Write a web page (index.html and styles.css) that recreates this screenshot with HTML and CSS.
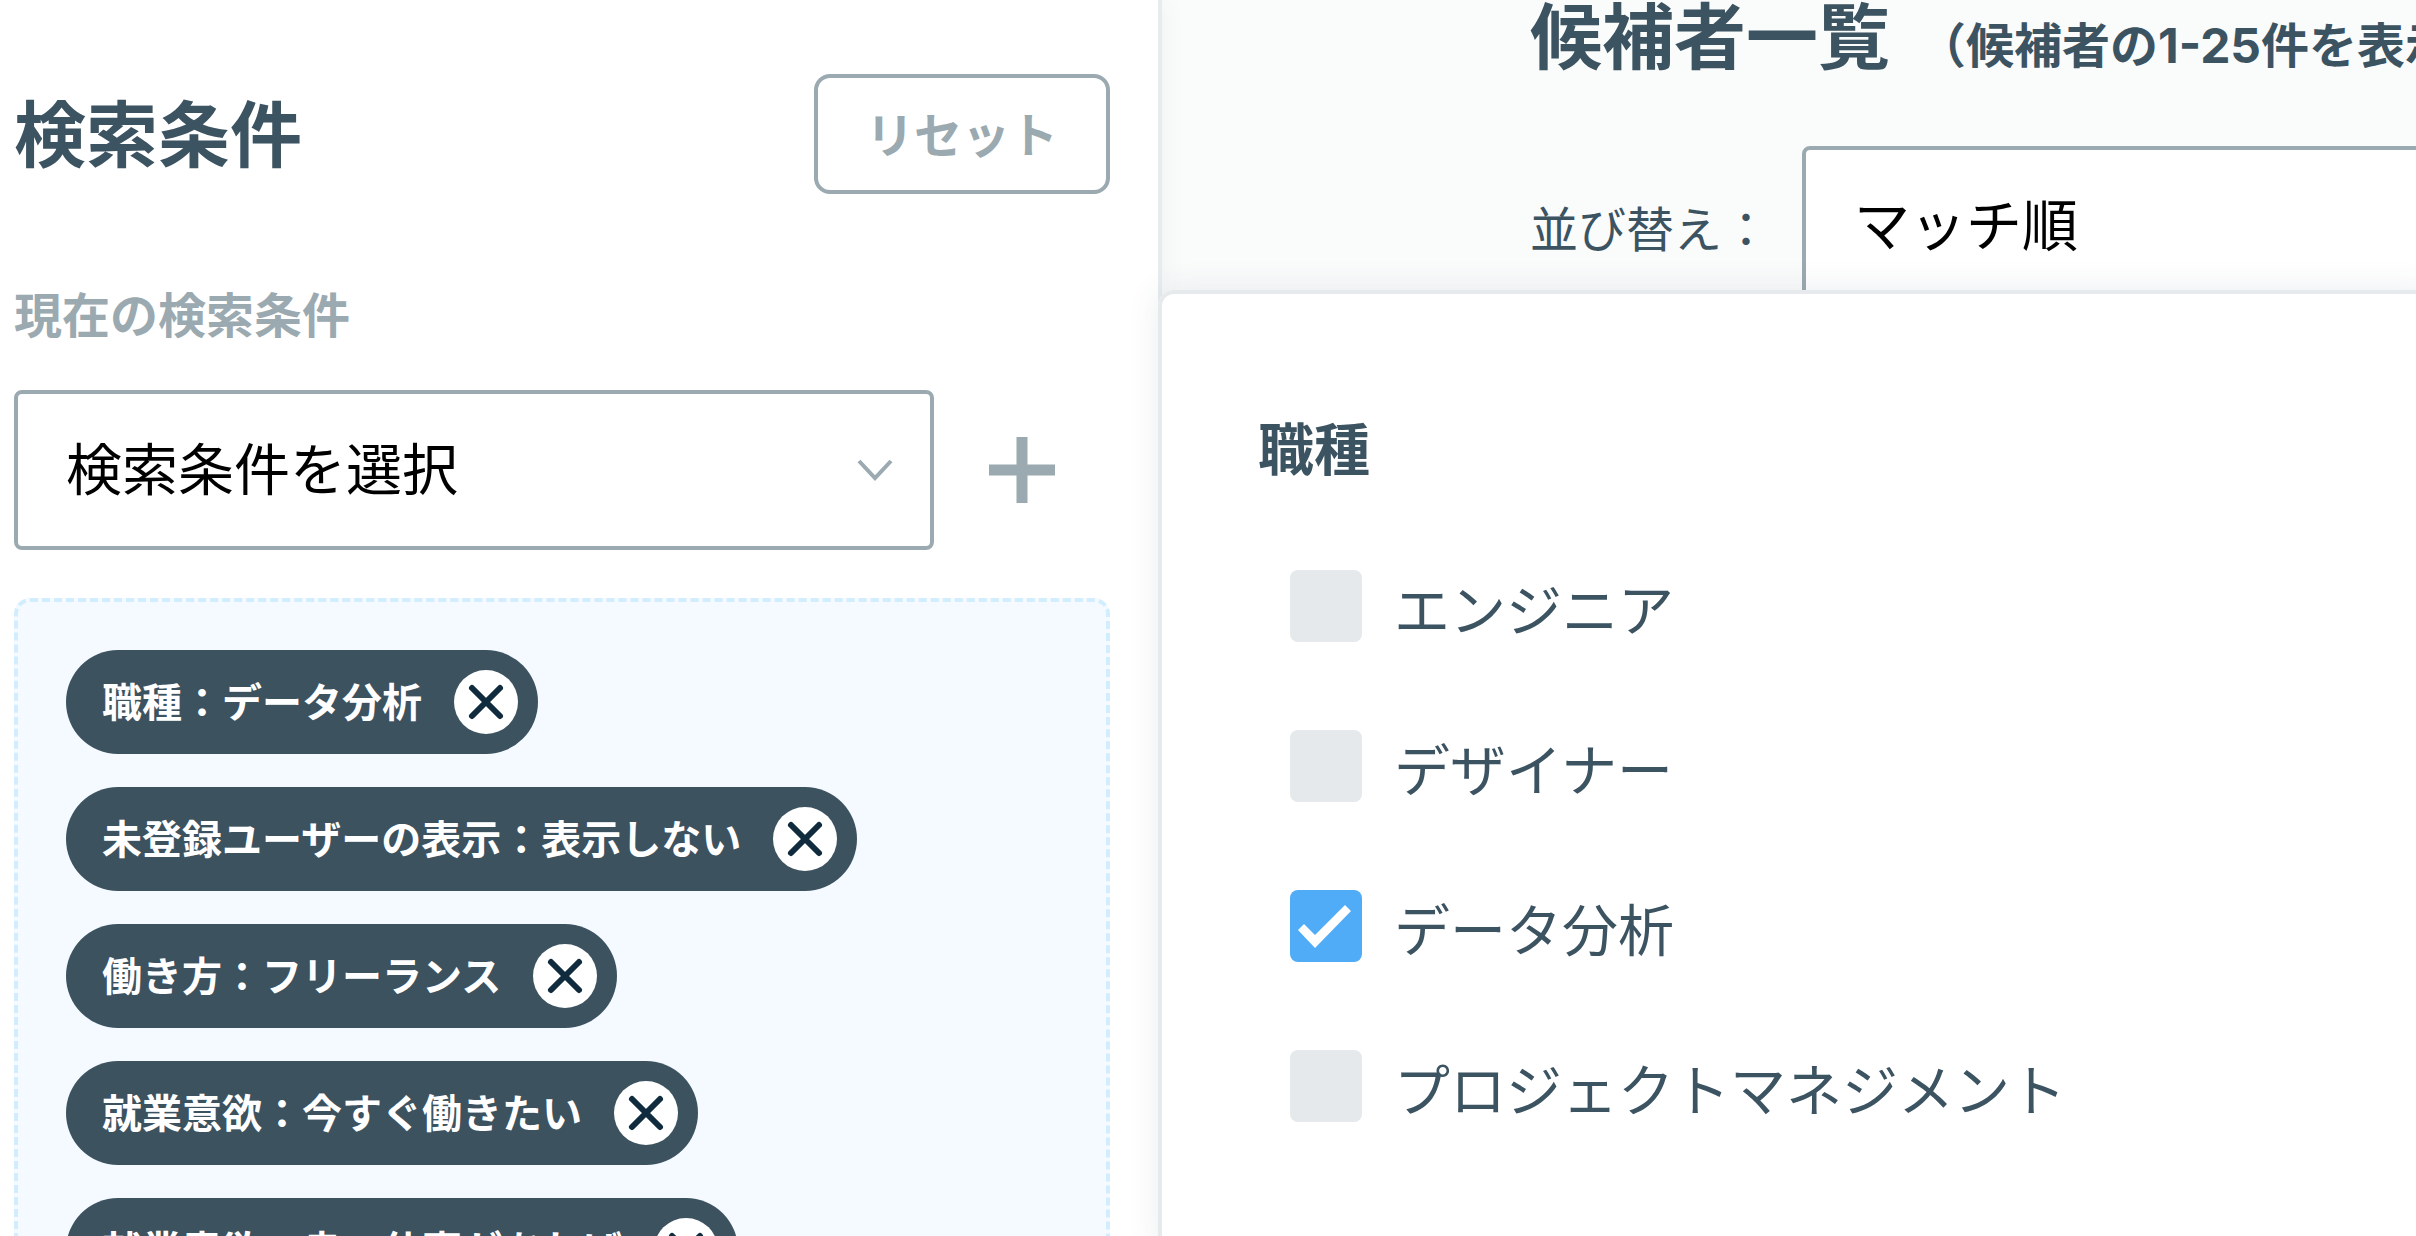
FILE: index.html
```
<!DOCTYPE html>
<html lang="ja">
<head>
  <meta charset="UTF-8" />
  <meta name="viewport" content="width=device-width, initial-scale=1.0"/>
  <title>候補者一覧</title>
  <link rel="stylesheet" href="styles.css">
</head>
<body>
  <aside class="sidebar">
    <div class="sidebar-header">
      <h2>検索条件</h2>
      <button type="button" class="reset-btn">リセット</button>
    </div>

    <label class="current-label" for="saved-search">現在の検索条件</label>
    <div class="search-row">
      <div class="select-box">
        <select id="saved-search">
          <option>検索条件を選択</option>
        </select>
        <svg class="chevron" viewBox="0 0 36 24" aria-hidden="true"><path d="M2 3 L18 20 L34 3"/></svg>
      </div>
      <button type="button" class="add-btn" aria-label="追加">
        <svg viewBox="0 0 68 68" aria-hidden="true"><path d="M34 1 V67 M1 34 H67"/></svg>
      </button>
    </div>

    <ul class="tags">
      <li class="tag">
        <span>職種：データ分析</span>
        <button type="button" class="tag-remove" aria-label="削除"><svg viewBox="0 0 64 64" aria-hidden="true"><path d="M18 18 L46 46 M46 18 L18 46"/></svg></button>
      </li>
      <li class="tag">
        <span>未登録ユーザーの表示：表示しない</span>
        <button type="button" class="tag-remove" aria-label="削除"><svg viewBox="0 0 64 64" aria-hidden="true"><path d="M18 18 L46 46 M46 18 L18 46"/></svg></button>
      </li>
      <li class="tag">
        <span>働き方：フリーランス</span>
        <button type="button" class="tag-remove" aria-label="削除"><svg viewBox="0 0 64 64" aria-hidden="true"><path d="M18 18 L46 46 M46 18 L18 46"/></svg></button>
      </li>
      <li class="tag">
        <span>就業意欲：今すぐ働きたい</span>
        <button type="button" class="tag-remove" aria-label="削除"><svg viewBox="0 0 64 64" aria-hidden="true"><path d="M18 18 L46 46 M46 18 L18 46"/></svg></button>
      </li>
      <li class="tag">
        <span>就業意欲：良い仕事があれば</span>
        <button type="button" class="tag-remove" aria-label="削除"><svg viewBox="0 0 64 64" aria-hidden="true"><path d="M18 18 L46 46 M46 18 L18 46"/></svg></button>
      </li>
    </ul>
  </aside>

  <main class="content">
    <div class="content-header">
      <h1>候補者一覧</h1>
      <span class="count">（候補者の1-25件を表示中）</span>
    </div>
    <div class="sort-row">
      <label for="sort">並び替え：</label>
      <div class="select-box">
        <select id="sort">
          <option>マッチ順</option>
        </select>
      </div>
    </div>

    <!-- job type menu, opens over the list -->
    <fieldset class="popover">
      <legend>職種</legend>
      <label class="check"><input type="checkbox" name="job">エンジニア</label>
      <label class="check"><input type="checkbox" name="job">デザイナー</label>
      <label class="check"><input type="checkbox" name="job" checked>データ分析</label>
      <label class="check"><input type="checkbox" name="job">プロジェクトマネジメント</label>
    </fieldset>
  </main>
</body>
</html>
```
FILE: styles.css
```
* {
  box-sizing: border-box;
}

body {
  display: flex;
  height: 100vh;
  margin: 0;
  overflow: hidden;
  background-color: #fff;
  color: #3c5361;
  font-family: "Noto Sans CJK JP", sans-serif;
}

h1,
h2 {
  margin: 0;
  font-size: 72px;
  line-height: 64px;
}

button,
select {
  margin: 0;
  font-family: inherit;
  cursor: pointer;
}

.sidebar {
  position: relative;
  z-index: 1;
  flex: 0 0 1162px;
  padding: 74px 48px 0 14px;
  border-right: 4px solid #e8ecef;
  background-color: #fff;
  box-shadow: 0 0 24px rgba(60, 83, 97, 0.06);
}

.sidebar-header {
  display: flex;
  align-items: center;
  justify-content: space-between;
}

.sidebar-header h2 {
  padding-bottom: 8px;
}

.reset-btn {
  width: 296px;
  height: 120px;
  padding: 0 0 4px;
  border: 4px solid #9ba9b0;
  border-radius: 16px;
  background-color: #fff;
  color: #9ba9b0;
  font-size: 48px;
  font-weight: bold;
}

.current-label {
  display: block;
  margin: 94px 0 54px;
  color: #9ba9b0;
  font-size: 48px;
  font-weight: bold;
  line-height: 48px;
}

.search-row {
  display: flex;
  align-items: center;
}

.select-box {
  position: relative;
  flex: 1;
}

.select-box select {
  display: block;
  width: 100%;
  height: 160px;
  padding: 0 48px 10px;
  border: 4px solid #9ba9b0;
  border-radius: 8px;
  background-color: #fff;
  color: #000;
  font-size: 56px;
  appearance: none;
}

.chevron {
  position: absolute;
  top: 68px;
  right: 41px;
  width: 36px;
  height: 24px;
  fill: none;
  stroke: #9ba9b0;
  stroke-width: 4;
  pointer-events: none;
}

.add-btn {
  display: flex;
  justify-content: center;
  width: 176px;
  padding: 0;
  border: none;
  background: none;
}

.add-btn svg {
  width: 68px;
  height: 68px;
  stroke: #9ba9b0;
  stroke-width: 11;
}

.tags {
  display: flex;
  flex-direction: column;
  align-items: flex-start;
  gap: 33px;
  margin: 48px 0 0;
  padding: 48px;
  border: 4px dashed #d2edfe;
  border-radius: 16px;
  background-color: #f4faff;
  list-style: none;
}

.tag {
  display: flex;
  align-items: center;
  gap: 32px;
  height: 104px;
  padding: 0 20px 0 36px;
  border-radius: 52px;
  background-color: #3c525f;
  color: #fff;
  font-size: 40px;
  font-weight: bold;
  line-height: 40px;
  white-space: nowrap;
}

.tag span {
  padding-bottom: 4px;
}

.tag-remove {
  width: 64px;
  height: 64px;
  padding: 0;
  border: none;
  border-radius: 50%;
  background-color: #fff;
}

.tag-remove svg {
  display: block;
  stroke: #0f2b3d;
  stroke-width: 6;
  stroke-linecap: round;
}

.content {
  position: relative;
  flex: 1;
  min-width: 0;
  padding-left: 368px;
  background-color: #fafbfb;
}

.content-header {
  display: flex;
  align-items: baseline;
  gap: 28px;
  white-space: nowrap;
}

.count {
  font-family: Inter, "Noto Sans CJK JP", sans-serif;
  font-size: 48px;
  font-weight: bold;
  line-height: 64px;
}

.sort-row {
  display: flex;
  align-items: center;
  gap: 32px;
  margin-top: 68px;
  font-size: 48px;
  white-space: nowrap;
}

.sort-row .select-box {
  flex: 0 0 720px;
}

.popover {
  position: absolute;
  z-index: 2;
  top: 290px;
  right: -20px;
  bottom: -20px;
  left: -4px;
  margin: 0;
  padding: 124px 96px;
  border: 4px solid #e6eaec;
  border-radius: 16px;
  background-color: #fff;
  box-shadow: 0 0 32px rgba(60, 83, 97, 0.1);
}

.popover legend {
  float: left;
  width: 100%;
  margin-bottom: 96px;
  padding: 0;
  font-size: 56px;
  font-weight: bold;
  line-height: 56px;
}

.check {
  display: flex;
  clear: both;
  align-items: center;
  gap: 32px;
  height: 72px;
  margin: 0 0 88px 32px;
  font-size: 56px;
}

.check input {
  position: relative;
  width: 72px;
  height: 72px;
  margin: 0;
  border-radius: 8px;
  background-color: #e5e9eb;
  appearance: none;
}

.check input:checked {
  background-color: #50acf7;
}

.check input:checked::before {
  content: "";
  position: absolute;
  inset: 0;
  background-color: #fff;
  clip-path: polygon(8px 40px, 14px 34px, 25px 45px, 55px 15px, 61px 21px, 25px 58px);
}
```
